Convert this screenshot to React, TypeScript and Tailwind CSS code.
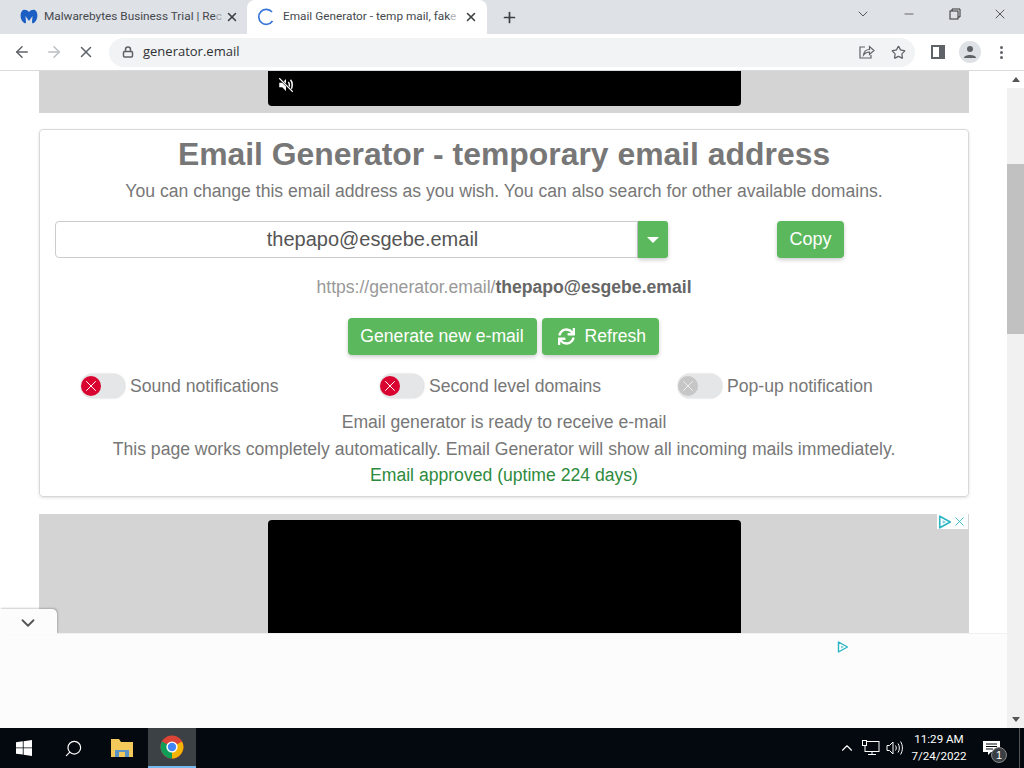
import React from 'react';
import { ArrowLeft, ArrowRight, X, Plus, Lock, Star, ChevronDown, ChevronUp, Minus, Search } from 'lucide-react';
import { FaSync } from 'react-icons/fa';

const MbLogo = () => (
  <svg width="18" height="16" viewBox="0 0 18 16">
    <path d="M9 3 C7 0.5 3.5 0 2 2 C0 4.5 0 10 3 13 C4.5 14.5 6 15 6 13 L5.5 7 L9 12 L12.5 7 L12 13 C12 15 13.5 14.5 15 13 C18 10 18 4.5 16 2 C14.5 0 11 0.5 9 3 Z" fill="#1b5fc4" />
  </svg>
);

const AdChoice = ({ size = 12 }: { size?: number }) => (
  <svg width={size} height={size} viewBox="0 0 12 12" fill="none">
    <path d="M1.5 1 L10.5 6 L1.5 11 Z" stroke="#2bb5c4" strokeWidth="1.4" strokeLinejoin="round" />
    <path d="M4 4.5 L7 6 L4 7.5 Z" fill="#7fd0da" />
  </svg>
);

const ChromeLogo = () => (
  <svg width="24" height="24" viewBox="0 0 24 24">
    <circle cx="12" cy="12" r="11.5" fill="#db4437" />
    <path d="M12 12 L22 6.5 A11.5 11.5 0 0 1 12 23.5 Z" fill="#f4b400" />
    <path d="M12 12 L12 23.5 A11.5 11.5 0 0 1 2 6.5 Z" fill="#0f9d58" />
    <circle cx="12" cy="12" r="5.6" fill="#fff" />
    <circle cx="12" cy="12" r="4.2" fill="#4285f4" />
  </svg>
);

const WinLogo = () => (
  <svg width="16" height="16" viewBox="0 0 16 16" fill="#fff">
    <path d="M0 2.3 L6.8 1.3 V7.5 H0 Z M7.6 1.2 L16 0 V7.5 H7.6 Z M0 8.3 H6.8 V14.6 L0 13.7 Z M7.6 8.3 H16 V16 L7.6 14.8 Z" />
  </svg>
);

const Toggle = ({ label, on }: { label: string; on: boolean }) => (
  <div className="flex items-center gap-[5px]">
    <div className="w-[44px] h-[24px] rounded-full bg-[#e4e6e7] flex items-center shadow-[0_0_2px_rgba(0,0,0,0.25)]">
      <div className={on ? 'w-[20px] h-[20px] rounded-full bg-[#d9042f] flex items-center justify-center' : 'w-[20px] h-[20px] rounded-full bg-[#c6c6c6] flex items-center justify-center'}>
        <X size={18} strokeWidth={1.3} className={on ? 'text-white' : 'text-[#efefef]'} />
      </div>
    </div>
    <span className="text-[17.6px] text-[#777]">{label}</span>
  </div>
);

const Tab = ({ active, icon, children }: { active?: boolean; icon: React.ReactNode; children: React.ReactNode }) => (
  <div className={active ? 'w-[240px] h-[34px] bg-white rounded-t-lg flex items-center pl-[10px] pr-[9px]' : 'w-[247px] h-[34px] flex items-center pl-[20px] pr-[8px]'}>
    {icon}
    <span className={active ? 'ml-[8px] whitespace-nowrap text-[11.8px] text-[#45494e]' : 'ml-[6px] whitespace-nowrap text-[11.8px] text-[#45494e]'}>{children}</span>
    <X size={14} strokeWidth={2.6} className="ml-auto text-[#3c4043]" />
  </div>
);

export default function App() {
  return (
    <div className="w-[1024px] h-[768px] overflow-hidden flex flex-col bg-white font-['Liberation_Sans',Arial,sans-serif]">
      {/* tab strip */}
      <div className="h-[34px] bg-[#dee1e6] flex items-center font-['Roboto',sans-serif] shrink-0">
        <Tab icon={<MbLogo />}>
          Malwarebytes Business Trial | Re<span className="opacity-40">c</span>
        </Tab>
        <Tab
          active
          icon={
            <svg width="18" height="18" viewBox="0 0 18 18" fill="none">
              <path d="M15 4 A7.5 7.5 0 1 0 15.5 13" stroke="#3b78d8" strokeWidth="1.7" />
            </svg>
          }
        >
          Email Generator - temp mail, fak<span className="opacity-40">e</span>
        </Tab>
        <Plus size={17} strokeWidth={2.4} className="ml-[14px] text-[#3c4043]" />
        <div className="ml-auto flex items-center text-[#333] -mt-[6px]">
          <ChevronDown size={16} strokeWidth={1.2} className="mr-[31px]" />
          <Minus size={14} strokeWidth={1.2} className="mr-[33px]" />
          <svg width="12" height="12" viewBox="0 0 12 12" fill="none" stroke="#333" className="mr-[31px]">
            <rect x="1" y="3" width="8" height="8" />
            <path d="M3 3 V1 H11 V9 H9" />
          </svg>
          <X size={16} strokeWidth={1.2} className="mr-[16px]" />
        </div>
      </div>

      {/* toolbar */}
      <div className="h-[37px] bg-white border-b border-[#d9dadc] flex items-center shrink-0">
        <ArrowLeft size={18} strokeWidth={2} className="ml-[13px] text-[#5f6368]" />
        <ArrowRight size={18} strokeWidth={2} className="ml-[14px] text-[#bcbfc4]" />
        <X size={18} strokeWidth={2} className="ml-[14px] text-[#5f6368]" />
        <div className="ml-[14px] flex-1 h-[29px] bg-[#f1f3f4] rounded-full flex items-center pl-[13px] pr-[9px]">
          <Lock size={12} strokeWidth={3} className="text-[#5f6368]" />
          <span className="ml-[9px] text-[13px] text-[#303134] font-['Open_Sans',sans-serif]">generator.email</span>
          <svg width="16" height="16" viewBox="0 0 16 16" fill="none" stroke="#5f6368" strokeWidth="1.2" className="ml-auto">
            <path d="M6 3 H1 V14 H12 V11" />
            <path d="M4.5 11 C5 7 7.5 5.5 10.5 5.5 V2.5 L15 6.5 L10.5 10.5 V8 C8 8 6 9 4.5 11 Z" />
          </svg>
          <Star size={15} strokeWidth={2} className="ml-[16px] text-[#5f6368]" />
        </div>
        <div className="ml-[16px] w-[14px] h-[14px] border-[2px] border-r-[6px] border-[#5f6368]" />
        <div className="ml-[14px] w-[22px] h-[22px] rounded-full bg-[#dee1e6] flex items-center justify-center">
          <svg width="14" height="14" viewBox="0 0 14 14" fill="#5f6368"><circle cx="7" cy="4" r="3" /><path d="M1 13 C1 9 13 9 13 13 Z" /></svg>
        </div>
        <div className="ml-[19px] mr-[21px] flex flex-col gap-[2px]">
          <div className="w-[3px] h-[3px] rounded-full bg-[#5f6368]" />
          <div className="w-[3px] h-[3px] rounded-full bg-[#5f6368]" />
          <div className="w-[3px] h-[3px] rounded-full bg-[#5f6368]" />
        </div>
      </div>

      {/* page */}
      <div className="flex-1 flex min-h-0 relative overflow-hidden">
        <div className="flex-1 pl-[39px] pr-[38px] overflow-hidden">
          <div className="h-[42px] bg-[#d4d4d4] flex justify-center">
            <div className="w-[473px] h-[35px] bg-black rounded-b flex items-center pl-[9px] pb-[7px]">
              <svg width="18" height="18" viewBox="0 0 24 24" fill="#fff">
                <path d="M3 9 V15 H7 L12 20 V4 L7 9 Z" />
                <path d="M15 8 C17 9.5 17 14.5 15 16 M18 5 C21 8 21 16 18 19" stroke="#fff" strokeWidth="2" fill="none" />
                <path d="M3 3 L21 21" stroke="#000" strokeWidth="3" />
                <path d="M3 3 L21 21" stroke="#fff" strokeWidth="1.5" />
              </svg>
            </div>
          </div>

          <div className="mt-[16px] h-[368px] border border-[#d8d8d8] rounded-[4px] shadow-[0_1px_3px_rgba(0,0,0,0.12)] flex flex-col items-center text-[#777]">
            <h1 className="mt-[3px] text-[31.9px] leading-[42px] font-bold text-[#777]">Email Generator - temporary email address</h1>
            <p className="mt-[3px] text-[17.6px] leading-[26px]">You can change this email address as you wish. You can also search for other available domains.</p>

            <div className="mt-[17px] w-full flex pl-[15px] pr-[124px]">
              <div className="flex-1 h-[37px] border border-[#ccc] rounded-l-[4px] flex items-center justify-center pl-[52px] pb-[2px] text-[20px] text-[#555]">
                thepapo@esgebe.email
              </div>
              <div className="w-[30px] h-[37px] bg-[#5cb85c] rounded-r-[3px] flex items-center justify-center shadow-[0_2px_4px_rgba(0,0,0,0.2)]">
                <div className="w-0 h-0 border-l-[6px] border-r-[6px] border-t-[6px] border-l-transparent border-r-transparent border-t-white" />
              </div>
              <div className="ml-[109px] w-[67px] h-[37px] bg-[#5cb85c] rounded-[4px] text-white text-[18px] flex items-center justify-center shadow-[0_2px_4px_rgba(0,0,0,0.2)]">
                Copy
              </div>
            </div>

            <div className="mt-[16px] text-[17.6px] leading-[26px] text-[#999]">
              https://generator.email/<b className="text-[#666]">thepapo@esgebe.email</b>
            </div>

            <div className="mt-[18px] mr-[2px] flex gap-[5px]">
              <div className="w-[189px] h-[37px] bg-[#5cb85c] rounded-[4px] text-white text-[17.6px] flex items-center justify-center shadow-[0_2px_4px_rgba(0,0,0,0.2)]">
                Generate new e-mail
              </div>
              <div className="w-[117px] h-[37px] bg-[#5cb85c] rounded-[4px] text-white text-[17.6px] flex items-center pl-[16px] gap-[10px] shadow-[0_2px_4px_rgba(0,0,0,0.2)]">
                <FaSync size={17} />
                Refresh
              </div>
            </div>

            <div className="mt-[18px] w-full grid grid-cols-[299px_298px_1fr] pl-[41px]">
              <Toggle label="Sound notifications" on />
              <Toggle label="Second level domains" on />
              <Toggle label="Pop-up notification" on={false} />
            </div>

            <p className="mt-[10px] text-[17.6px] leading-[26px]">Email generator is ready to receive e-mail</p>
            <p className="mt-[1px] text-[17.6px] leading-[26px]">This page works completely automatically. Email Generator will show all incoming mails immediately.</p>
            <p className="text-[17.6px] leading-[26px] text-[#2e8b3d]">Email approved (uptime 224 days)</p>
          </div>

          <div className="mt-[17px] h-[400px] bg-[#d4d4d4] flex justify-center pt-[6px] relative">
            <div className="w-[473px] h-[300px] bg-black rounded-t" />
            <div className="absolute top-0 right-[1px] flex bg-white h-[15px] w-[31px] items-center justify-between px-[1px]">
              <AdChoice size={14} />
              <X size={15} strokeWidth={1.4} className="text-[#2bb5c4]" />
            </div>
          </div>
        </div>

        {/* scrollbar */}
        <div className="w-[17px] bg-[#f1f1f1] flex flex-col items-center shrink-0">
          <div className="h-[17px] flex items-center justify-center bg-white w-full">
            <div className="w-0 h-0 border-l-[4px] border-r-[4px] border-b-[5px] border-l-transparent border-r-transparent border-b-[#555]" />
          </div>
          <div className="mt-[76px] w-full h-[170px] bg-[#c1c1c1]" />
          <div className="mt-auto h-[17px] flex items-center justify-center">
            <div className="w-0 h-0 border-l-[4px] border-r-[4px] border-t-[5px] border-l-transparent border-r-transparent border-t-[#555]" />
          </div>
        </div>

        {/* sticky ad overlay */}
        <div className="absolute left-0 right-[17px] bottom-0 h-[95px] bg-[#fcfcfc] border-t border-[#f0f0f0]">
          <div className="absolute -top-[25px] left-0 w-[57px] h-[25px] bg-[#fcfcfc] rounded-tr-[5px] shadow-[1px_-1px_2px_rgba(0,0,0,0.2)] flex items-center justify-center pt-[3px]">
            <ChevronDown size={22} strokeWidth={2} className="text-[#555] -ml-[2px]" />
          </div>
          <div className="absolute top-[7px] left-[837px]"><AdChoice /></div>
        </div>
      </div>

      {/* taskbar */}
      <div className="h-[40px] bg-[#03090e] flex items-center shrink-0 text-white">
        <div className="ml-[16px]"><WinLogo /></div>
        <Search size={19} strokeWidth={1.5} className="ml-[32px] -scale-x-100" />
        <svg width="22" height="18" viewBox="0 0 22 18" className="ml-[28px]">
          <path d="M0 0 H8 L10 3 H22 V18 H0 Z" fill="#f3c95b" />
          <rect x="4" y="11" width="14" height="7" fill="#5a93c4" />
          <rect x="8" y="13" width="6" height="5" fill="#f3c95b" />
        </svg>
        <div className="ml-[15px] w-[48px] h-[40px] bg-[#3b4145] border-b-2 border-[#76b9ed] flex items-center justify-center">
          <ChromeLogo />
        </div>
        <div className="ml-auto flex items-center">
          <ChevronUp size={18} strokeWidth={1.5} />
          <svg width="18" height="16" viewBox="0 0 18 16" fill="none" stroke="#fff" className="ml-[6px]">
            <rect x="3" y="1.5" width="14" height="10" />
            <rect x="0.5" y="0.5" width="4" height="5" fill="#03090e" />
            <path d="M10 11.5 V14.5 M6 14.5 H14" />
          </svg>
          <svg width="18" height="16" viewBox="0 0 18 16" fill="none" stroke="#fff" className="ml-[6px]">
            <path d="M1 5.5 H3.5 L7 2 V14 L3.5 10.5 H1 Z" />
            <path d="M9.5 5.5 C10.5 7 10.5 9 9.5 10.5 M12 3.5 C13.8 6 13.8 10 12 12.5 M14.5 1.5 C17 5 17 11 14.5 14.5" />
          </svg>
          <div className="ml-[5px] w-[60px] flex flex-col items-center text-[11.6px] leading-[17px] font-['Roboto',sans-serif]">
            <span>11:29 AM</span>
            <span>7/24/2022</span>
          </div>
          <div className="ml-[14px] relative">
            <svg width="17" height="15" viewBox="0 0 17 15" fill="#fff">
              <path d="M0 0 H17 V11 H8 L5 14 V11 H0 Z" />
              <path d="M3 3 H14 M3 5.5 H14 M3 8 H10" stroke="#03090e" strokeWidth="1" />
            </svg>
            <div className="absolute -right-[7px] -bottom-[7px] w-[16px] h-[16px] rounded-full bg-[#3a3f43] border border-[#888] text-[11px] leading-[14px] text-center">1</div>
          </div>
          <div className="ml-[19px] mr-[4px] w-px h-[40px] bg-[#555]" />
        </div>
      </div>
    </div>
  );
}
